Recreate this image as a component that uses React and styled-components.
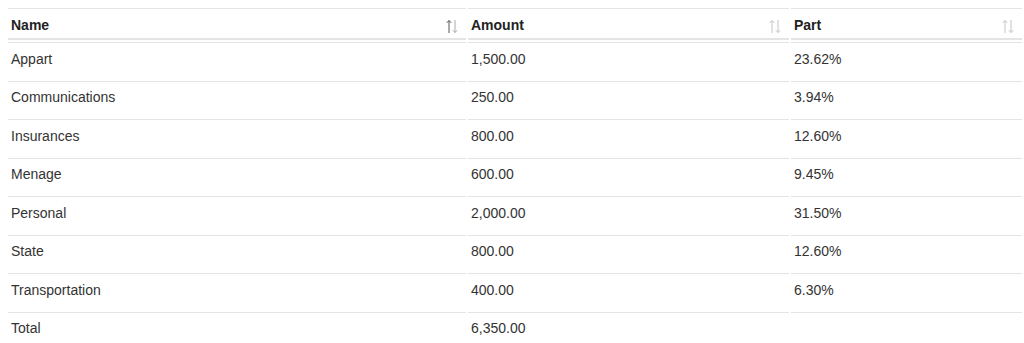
import React from "react";
import styled, { createGlobalStyle } from "styled-components";

const Global = createGlobalStyle`
  html, body { margin: 0; padding: 0; background: #fff; }
  body { margin: 6px 0 0 6px; font-family: "Liberation Sans", Arial, sans-serif; overflow: hidden; }
`;

const Table = styled.table`
  width: 1018px;
  border-collapse: separate;
  border-spacing: 2px;
  font-family: "Liberation Sans", Arial, sans-serif;
  font-size: 14px;
  color: #333;
  table-layout: fixed;
`;

const Th = styled.th`
  text-align: left;
  font-weight: bold;
  color: #222;
  padding: 6px 8px 3px 3px;
  line-height: 20px;
  border-top: 1px solid #e4e4e4;
  border-bottom: 2px solid #e4e4e4;
`;

const HeadInner = styled.div`
  display: flex;
  align-items: center;
  justify-content: space-between;
`;

const Td = styled.td`
  padding: 5.5px 3px 10px 3px;
  line-height: 20px;
  border-top: 1px solid #e4e4e4;
  white-space: nowrap;
`;

const IconWrap = styled.span`
  display: inline-flex;
  margin-top: 3px;
`;

function SortIcon({ active }) {
  const up = active ? "#555" : "#c4c4c4";
  const down = active ? "#aaa" : "#c4c4c4";
  return (
    <IconWrap>
      <svg width="12" height="15" viewBox="0 0 12 15" fill="none" strokeWidth="1">
        <path d="M3 1.5V14M0.8 3.8L3 1.5L5.2 3.8" stroke={up} />
        <path d="M9 1V13.5M6.8 11.2L9 13.5L11.2 11.2" stroke={down} />
      </svg>
    </IconWrap>
  );
}

const rows = [
  ["Appart", "1,500.00", "23.62%"],
  ["Communications", "250.00", "3.94%"],
  ["Insurances", "800.00", "12.60%"],
  ["Menage", "600.00", "9.45%"],
  ["Personal", "2,000.00", "31.50%"],
  ["State", "800.00", "12.60%"],
  ["Transportation", "400.00", "6.30%"],
  ["Total", "6,350.00", ""],
];

const cols = [
  { label: "Name", width: 458, active: true },
  { label: "Amount", width: 321 },
  { label: "Part", width: 231 },
];

export default function App() {
  return (
    <>
      <Global />
      <Table>
        <colgroup>
          {cols.map((c) => (
            <col key={c.label} style={{ width: c.width }} />
          ))}
        </colgroup>
        <thead>
          <tr>
            {cols.map((c) => (
              <Th key={c.label}>
                <HeadInner>
                  <span>{c.label}</span>
                  <SortIcon active={c.active} />
                </HeadInner>
              </Th>
            ))}
          </tr>
        </thead>
        <tbody>
          {rows.map((r) => (
            <tr key={r[0]}>
              {r.map((v, i) => (
                <Td key={i}>{v}</Td>
              ))}
            </tr>
          ))}
        </tbody>
      </Table>
    </>
  );
}
